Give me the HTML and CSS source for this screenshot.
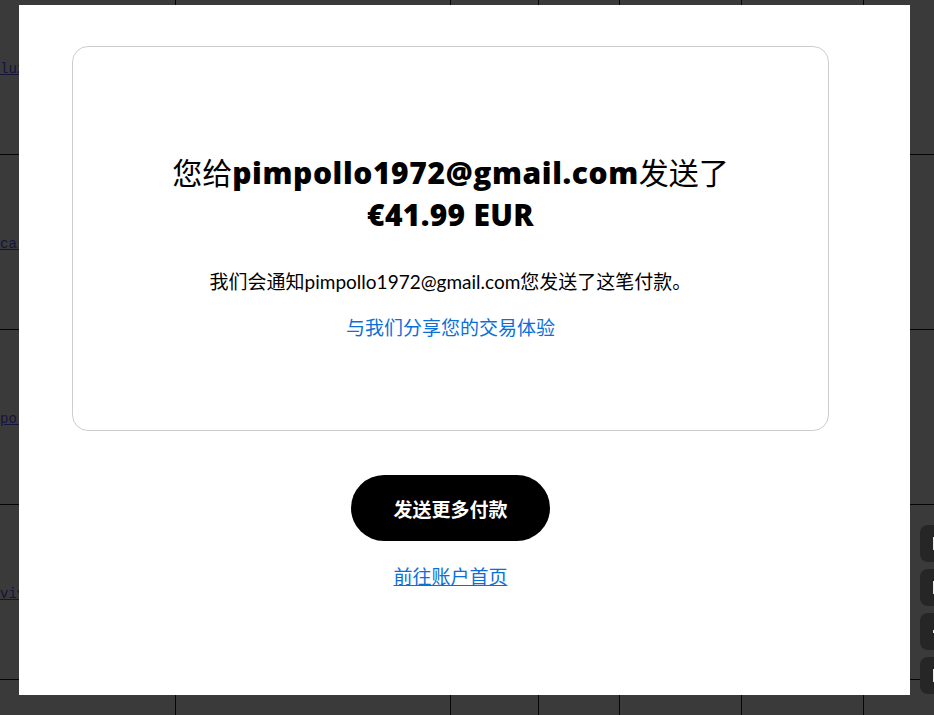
FILE: index.html
```html
<!doctype html>
<html lang="zh-CN">
  <head>
    <meta charset="UTF-8" />
    <meta name="viewport" content="width=device-width, initial-scale=1.0" />
    <title>付款已发送</title>
    <link rel="stylesheet" href="styles.css">
  </head>
  <body>
    <table id="backdrop">
      <tr>
        <td class="col-a"><a href="#">luz.pimpollo</a></td>
        <td class="col-b dashed"></td>
        <td class="col-c"></td>
        <td class="col-d"></td>
        <td class="col-e"></td>
        <td class="col-f dashed"></td>
        <td class="col-g"></td>
      </tr>
      <tr>
        <td class="col-a"><a href="#">ca.pimpollo</a></td>
        <td class="col-b dashed"></td>
        <td></td>
        <td></td>
        <td></td>
        <td class="dashed"></td>
        <td></td>
      </tr>
      <tr>
        <td class="col-a"><a href="#">pol.pimpollo</a></td>
        <td class="col-b dashed"></td>
        <td></td>
        <td></td>
        <td></td>
        <td class="dashed"></td>
        <td></td>
      </tr>
      <tr>
        <td class="col-a"><a href="#">viv.pimpollo</a></td>
        <td class="col-b dashed"></td>
        <td></td>
        <td></td>
        <td></td>
        <td class="dashed"></td>
        <td></td>
      </tr>
      <tr class="last-row">
        <td class="col-a"></td>
        <td class="col-b dashed"></td>
        <td></td>
        <td></td>
        <td></td>
        <td class="dashed"></td>
        <td></td>
      </tr>
    </table>

    <div id="side-tools">
      <button class="side-btn"></button>
      <button class="side-btn"></button>
      <button class="side-btn dot"></button>
      <button class="side-btn"></button>
    </div>

    <div id="modal">
      <div class="modal-body">
        <div class="result-card">
          <h1 class="result-title">
            您给<strong>pimpollo1972@gmail.com</strong>发送了
            <strong class="amount">€41.99 EUR</strong>
          </h1>
          <p class="result-note">我们会通知pimpollo1972@gmail.com您发送了这笔付款。</p>
          <a class="share-link" href="#">与我们分享您的交易体验</a>
        </div>

        <div class="actions">
          <button id="send-more-btn">发送更多付款</button>
          <a class="home-link" href="#">前往账户首页</a>
        </div>
      </div>
    </div>
  </body>
</html>
```

FILE: styles.css
```css
body {
  margin: 0;
  height: 100vh;
  overflow: hidden;
  background-color: #3a3a3a;
  font-family: 'Lato', 'Noto Sans CJK SC', sans-serif;
}

/* page behind the dialog */
#backdrop {
  width: 958px;
  border-collapse: collapse;
  margin-top: -21px;
  table-layout: fixed;
}
#backdrop td {
  height: 174px;
  padding: 0;
  border: 1px solid #050505;
  vertical-align: middle;
}
#backdrop td:first-child {
  border-left: none;
}
#backdrop td.dashed {
  border-right: 1px dashed #111;
}
#backdrop .last-row td {
  height: 35px;
  border-top: 1px dashed #111;
  border-bottom: none;
}
#backdrop a {
  font-family: 'Liberation Mono', monospace;
  font-size: 14px;
  color: #14143c;
  white-space: nowrap;
}
.col-a { width: 175px; }
.col-b { width: 274px; }
.col-c { width: 87px; }
.col-d { width: 80px; }
.col-e { width: 121px; }
.col-f { width: 121px; }
.col-g { width: 100px; }

#side-tools {
  position: fixed;
  top: 525px;
  right: -26px;
  display: flex;
  flex-direction: column;
  gap: 7px;
}
.side-btn {
  position: relative;
  width: 40px;
  height: 37px;
  border: none;
  border-radius: 8px;
  background-color: #262626;
}
.side-btn::before {
  content: '';
  position: absolute;
  left: 13px;
  top: 12px;
  width: 4px;
  height: 13px;
  background-color: #e6e6e6;
}
.side-btn.dot::before {
  top: 17px;
  height: 3px;
}

/* dialog */
#modal {
  position: fixed;
  top: 5px;
  left: 19px;
  width: 891px;
  height: 690px;
  background-color: #fff;
}
.modal-body {
  padding: 41px 81px 0 53px;
}
.result-card {
  height: 279px;
  padding: 104px 40px 0;
  border: 1px solid #cdcdcd;
  border-radius: 16px;
  text-align: center;
  color: #000;
}
.result-title {
  margin: 0;
  font-size: 30px;
  line-height: 42px;
  font-weight: normal;
}
.result-title strong {
  font-family: 'Open Sans', 'Noto Sans CJK SC', sans-serif;
  font-weight: 800;
  letter-spacing: 0.6px;
}
.result-title .amount {
  display: block;
  letter-spacing: 0.3px;
}
.result-note {
  margin: 32px 0 18px;
  font-size: 19px;
  line-height: 28px;
}
.share-link {
  font-size: 19px;
  line-height: 28px;
  color: #0b6fd9;
  text-decoration: none;
}

.actions {
  display: flex;
  flex-direction: column;
  align-items: center;
  margin-top: 44px;
}
#send-more-btn {
  width: 199px;
  height: 66px;
  border: none;
  border-radius: 33px;
  background-color: #000;
  color: #fff;
  font-family: inherit;
  font-size: 19px;
  font-weight: bold;
  cursor: pointer;
}
.home-link {
  margin-top: 22px;
  font-size: 19px;
  line-height: 28px;
  color: #0b6fd9;
  text-decoration: underline;
}
```
